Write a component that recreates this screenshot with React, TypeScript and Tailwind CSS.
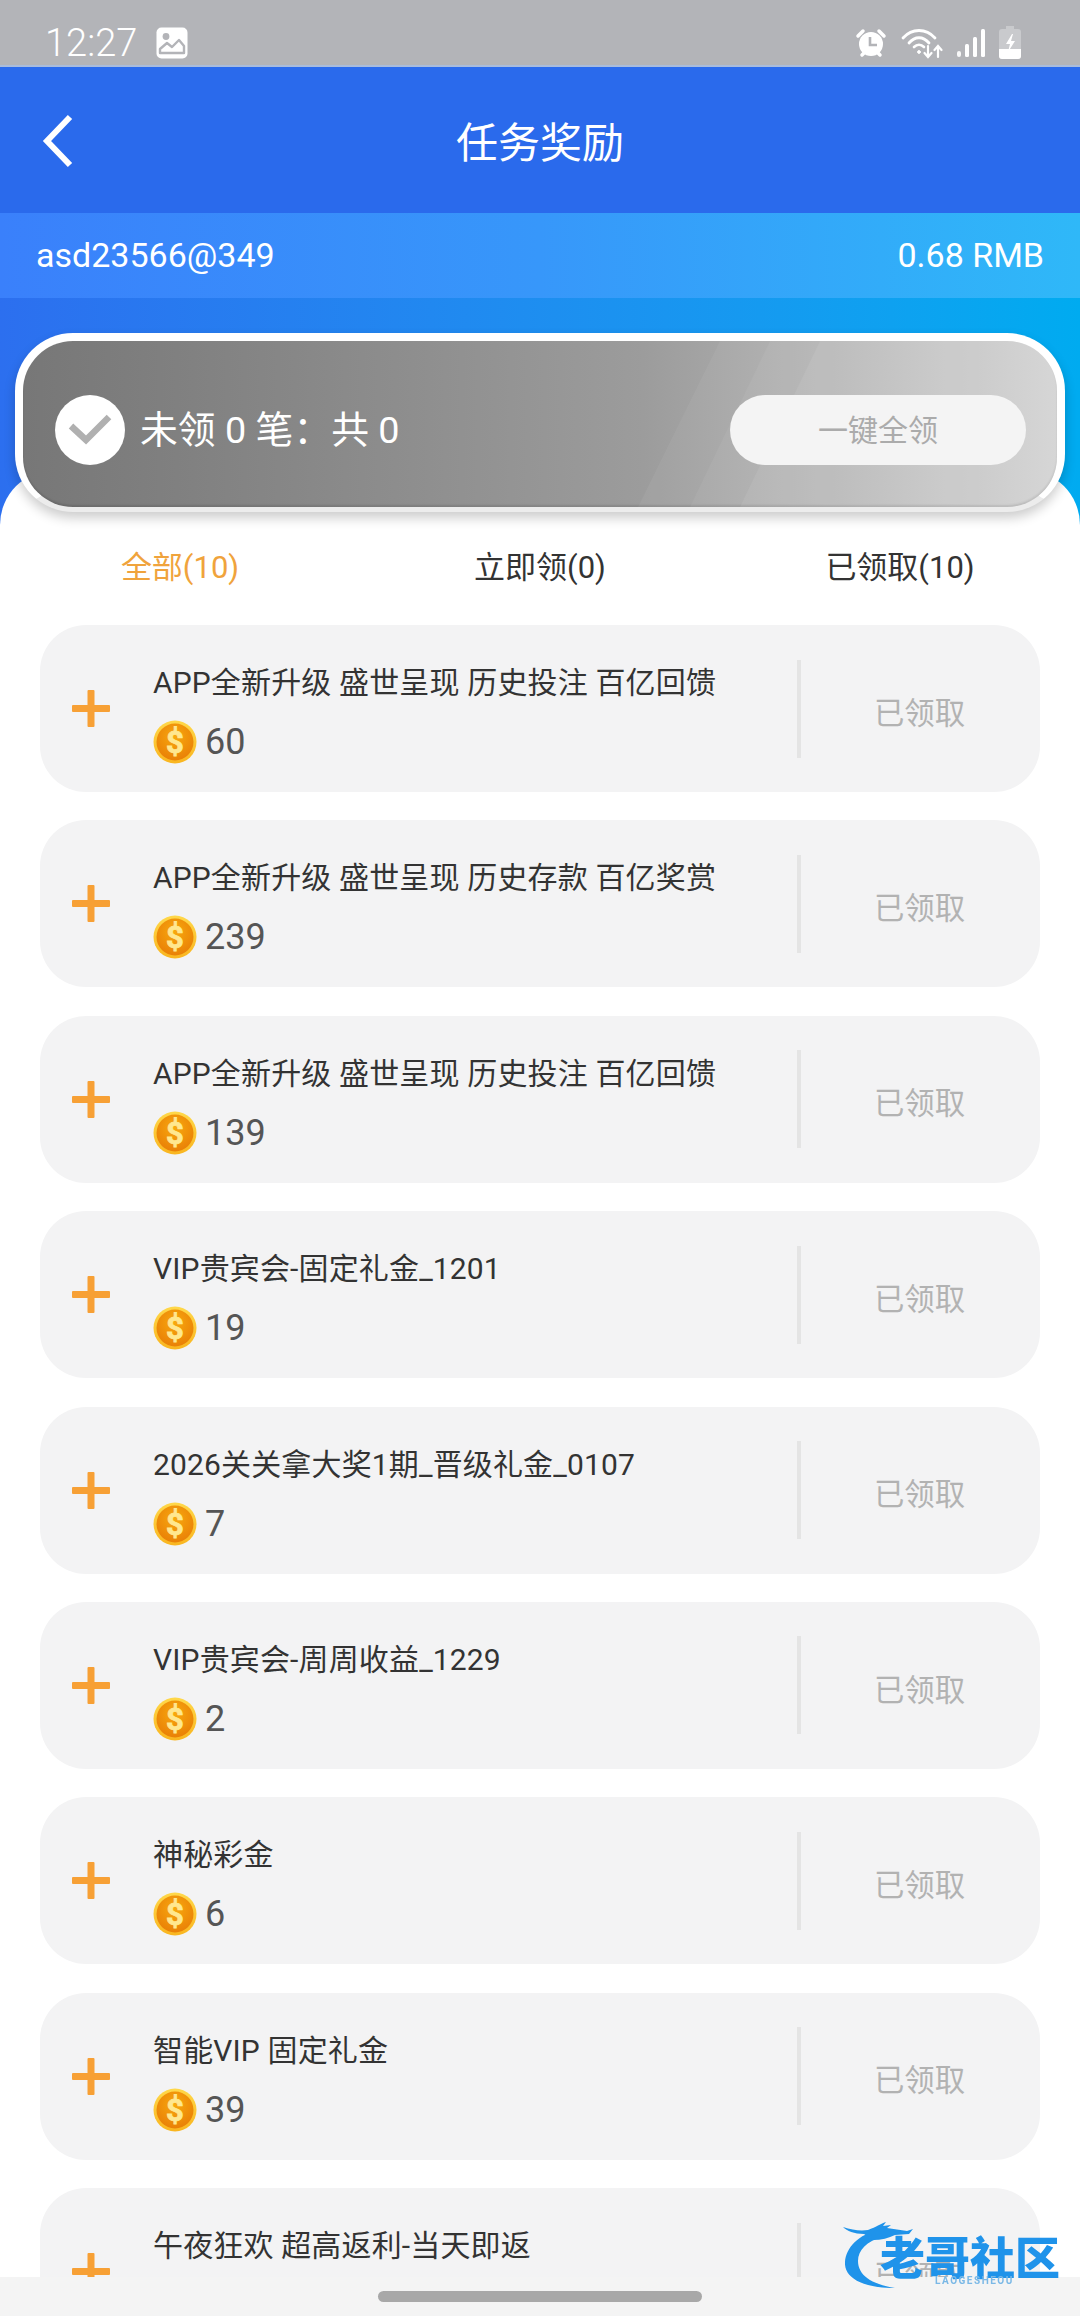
import React from "react";

type Reward = { title: string; amount?: string };

const rewards: Reward[] = [
  { title: "APP全新升级 盛世呈现 历史投注 百亿回馈", amount: "60" },
  { title: "APP全新升级 盛世呈现 历史存款 百亿奖赏", amount: "239" },
  { title: "APP全新升级 盛世呈现 历史投注 百亿回馈", amount: "139" },
  { title: "VIP贵宾会-固定礼金_1201", amount: "19" },
  { title: "2026关关拿大奖1期_晋级礼金_0107", amount: "7" },
  { title: "VIP贵宾会-周周收益_1229", amount: "2" },
  { title: "神秘彩金", amount: "6" },
  { title: "智能VIP 固定礼金", amount: "39" },
  { title: "午夜狂欢 超高返利-当天即返" },
];

const Icon = {
  picture: () => (
    <svg width="32" height="32" viewBox="0 0 32 32">
      <rect x="0.5" y="0.5" width="31" height="31" rx="5" fill="#fff" />
      <circle cx="10" cy="9.5" r="3.4" fill="#b3b4b8" />
      <path d="M4 26v-4l7-6 5 4 7-7 5 6v7z" fill="none" stroke="#b3b4b8" strokeWidth="2.4" strokeLinejoin="round" />
    </svg>
  ),
  alarm: () => (
    <svg width="32" height="30" viewBox="0 0 32 30">
      <circle cx="16" cy="16" r="12" fill="#fff" />
      <path d="M3 8l5-5M29 8l-5-5M7 27l3-3M25 27l-3-3" stroke="#fff" strokeWidth="3.5" strokeLinecap="round" />
      <path d="M15 9v8h7" fill="none" stroke="#b3b4b8" strokeWidth="2.6" />
    </svg>
  ),
  wifi: () => (
    <svg width="42" height="32" viewBox="0 0 42 32" fill="none" stroke="#fff" strokeLinecap="round">
      <path d="M2 11C11 1 25 1 34 11" strokeWidth="2.8" />
      <path d="M8 16C14 9 22 9 28 16" strokeWidth="2.8" />
      <path d="M13 20C16 17 20 17 23 20" strokeWidth="2.6" />
      <circle cx="18" cy="25" r="1.4" fill="#fff" strokeWidth="1" />
      <path d="M27 19v11M23.5 26l3.5 4 3.5-4M37 30V19M33.5 23l3.5-4 3.5 4" strokeWidth="2.2" />
    </svg>
  ),
  signal: () => (
    <svg width="28" height="28" viewBox="0 0 28 28" fill="#fff">
      <rect x="0" y="22" width="4" height="6" rx="2" opacity="0.9" />
      <rect x="8" y="15" width="4" height="13" rx="1.5" />
      <rect x="16" y="8" width="4" height="20" rx="1.5" />
      <rect x="24" y="0" width="4" height="28" rx="1.5" />
    </svg>
  ),
  battery: () => (
    <svg width="22" height="33" viewBox="0 0 22 33">
      <path d="M7 0h8v3h4a3 3 0 0 1 3 3v24a3 3 0 0 1-3 3H3a3 3 0 0 1-3-3V6a3 3 0 0 1 3-3h4z" fill="#c9cacd" />
      <path d="M0 23h22v7a3 3 0 0 1-3 3H3a3 3 0 0 1-3-3z" fill="#fff" />
      <path d="M13 8l-6 10h4l-2 8 7-11h-4l2-7z" fill="#fff" />
    </svg>
  ),
  back: () => (
    <svg width="32" height="54" viewBox="0 0 32 54" fill="none">
      <path d="M28 3L5 27l23 24" stroke="#fff" strokeWidth="6" />
    </svg>
  ),
  check: () => (
    <svg width="44" height="34" viewBox="0 0 44 34" fill="none">
      <path d="M3 13l15 14L41 4" stroke="#b0b0b0" strokeWidth="6.5" />
    </svg>
  ),
  plus: () => (
    <svg width="38" height="37" viewBox="0 0 38 37" fill="#f7a035">
      <rect x="0" y="15" width="38" height="7" rx="1" />
      <rect x="15.5" y="0" width="7" height="37" rx="1" />
    </svg>
  ),
  coin: () => (
    <svg width="44" height="44" viewBox="0 0 44 44">
      <defs>
        <linearGradient id="coinRim" x1="0" y1="0" x2="0" y2="1">
          <stop offset="0%" stopColor="#ffd84a" />
          <stop offset="100%" stopColor="#f9b51f" />
        </linearGradient>
        <radialGradient id="coinFace" cx="50%" cy="35%" r="70%">
          <stop offset="0%" stopColor="#f8a80e" />
          <stop offset="100%" stopColor="#e87d06" />
        </radialGradient>
      </defs>
      <circle cx="22" cy="22" r="21.5" fill="url(#coinRim)" />
      <circle cx="22" cy="22" r="18.5" fill="url(#coinFace)" />
      <text
        x="22"
        y="33"
        textAnchor="middle"
        fontSize="31"
        fontWeight="700"
        fill="#ffe78f"
        stroke="#ffe78f"
        strokeWidth="0.8"
        fontFamily="Roboto, sans-serif"
      >
        $
      </text>
    </svg>
  ),
  dragon: () => (
    <svg width="76" height="68" viewBox="0 0 76 68">
      <path
        d="M38 8C16 12 4 26 3 40c-1 15 16 26 50 26-24-4-37-13-37-27 0-11 9-20 24-24z"
        fill="#1f93ea"
      />
      <path
        d="M1 5c9 3 17 4 25 3 8-3 14-7 18-8l-3 4 8-1-4 3 20 3 6-2-4 5-14 1c-6 3-14 5-22 5L22 12C12 12 5 9 1 5z"
        fill="#1f93ea"
      />
    </svg>
  ),
};

function RewardCard({ title, amount }: Reward) {
  return (
    <div className="flex h-[167px] shrink-0 items-center rounded-[46px] bg-[#f3f3f4]">
      <div className="ml-[32px] mr-[43px] shrink-0">
        <Icon.plus />
      </div>
      <div className="flex h-full min-w-0 flex-1 flex-col pt-[36px]">
        <p className="h-[44px] text-[30px] leading-[44px] tracking-[0.15px] text-[#333333]">{title}</p>
        {amount && (
          <div className="mt-[15px] flex items-center gap-[8px]">
            <Icon.coin />
            <span className="text-[36px] leading-[44px] text-[#555555]">{amount}</span>
          </div>
        )}
      </div>
      <div className="h-[98px] w-[4px] shrink-0 bg-[#e4e4e4]" />
      <div className="w-[239px] shrink-0 pt-[10px] pr-[2px] text-center text-[30.4px] text-[#b2b2b2]">已领取</div>
    </div>
  );
}

export default function App() {
  return (
    <div className="relative h-[2316px] w-[1080px] overflow-hidden bg-white font-['Roboto','Noto_Sans_CJK_SC',sans-serif]">
      {/* system status bar */}
      <div className="flex h-[67px] items-center justify-between border-b-2 border-[#a9bcdc] bg-[#b3b4b8] pl-[45px] pr-[59px] pt-[20px]">
        <div className="flex items-center gap-[19px]">
          <span className="text-[38px] leading-none font-light text-white">12:27</span>
          <Icon.picture />
        </div>
        <div className="flex items-center gap-[14px]">
          <Icon.alarm />
          <Icon.wifi />
          <Icon.signal />
          <Icon.battery />
        </div>
      </div>

      <header className="relative flex h-[146px] items-center justify-center bg-[#2a6aec] pt-[7px]">
        <div className="absolute left-[42px] top-[47px]">
          <Icon.back />
        </div>
        <h1 className="text-[42px] font-normal text-white">任务奖励</h1>
      </header>

      <div className="flex h-[85px] items-center justify-between bg-gradient-to-r from-[#3a80fb] via-[#3797fa] to-[#2fb8f8] px-[36px] text-[34px] text-white">
        <span>asd23566@349</span>
        <span>0.68 RMB</span>
      </div>

      <div className="bg-gradient-to-r from-[#2c6fef] to-[#00abf0] pt-[35px]">
        {/* claim-all banner */}
        <div className="relative z-10 mx-[15px] h-[179px] rounded-[58px] border-x-[8px] border-t-[8px] border-b-[5px] border-x-white border-t-white border-b-[#ececec] bg-white shadow-[0_6px_12px_rgba(0,0,0,0.2)]">
          <div className="relative flex h-full items-center justify-between overflow-hidden rounded-[50px] bg-gradient-to-r from-[#777777] via-[#9c9c9c] via-60% to-[#cfcfcf] pl-[32px] pr-[31px] pt-[12px] shadow-[inset_0_-2px_2px_rgba(0,0,0,0.12)]">
            <svg className="absolute inset-0" width="1034" height="166" viewBox="0 0 1034 166" fill="#fff">
              <path d="M615 166L697 0H1034V166z" opacity="0.05" />
              <path d="M667 166L747 0H1034V166z" opacity="0.05" />
              <path d="M717 166L797 0H1034V166z" opacity="0.07" />
            </svg>
            <div className="relative flex items-center gap-[15px]">
              <div className="flex h-[70px] w-[70px] items-center justify-center rounded-full bg-white">
                <Icon.check />
              </div>
              <span className="text-[37.8px] text-white">未领 0 笔：共 0</span>
            </div>
            <button className="relative h-[70px] w-[296px] rounded-[35px] bg-[#f4f4f4] text-[30px] text-[#ababab]">
              一键全领
            </button>
          </div>
        </div>

        <div className="-mt-[42px] rounded-t-[55px] bg-white pt-[70px]">
          <div className="grid h-[56px] grid-cols-3 items-center text-center text-[31px] text-[#333333]">
            <span className="text-[#f0a33c]">全部(10)</span>
            <span>立即领(0)</span>
            <span>已领取(10)</span>
          </div>
          <div className="mt-[29px] flex flex-col gap-[28.4px] px-[40px]">
            {rewards.map((reward, i) => (
              <RewardCard key={i} {...reward} />
            ))}
          </div>
        </div>
      </div>

      {/* gesture bar */}
      <div className="absolute inset-x-0 bottom-0 flex h-[39px] justify-center bg-[#f4f4f4] pt-[14px]">
        <div className="h-[11px] w-[324px] rounded-full bg-[#a8a8a8]" />
      </div>

      {/* community watermark */}
      <div className="absolute left-[842px] top-[2222px] h-[68px] w-[222px] blur-[0.6px]">
        <div className="absolute left-0 top-0">
          <Icon.dragon />
        </div>
        <span className="absolute left-[38px] top-[12px] text-[45px] leading-[52px] font-black whitespace-nowrap text-[#1f93ea]">
          老哥社区
        </span>
        <span className="absolute left-[93px] top-[53px] text-[10px] leading-[12px] font-bold tracking-[1.5px] text-[#7ab8e6]">
          LAOGESHEOU
        </span>
      </div>
    </div>
  );
}
